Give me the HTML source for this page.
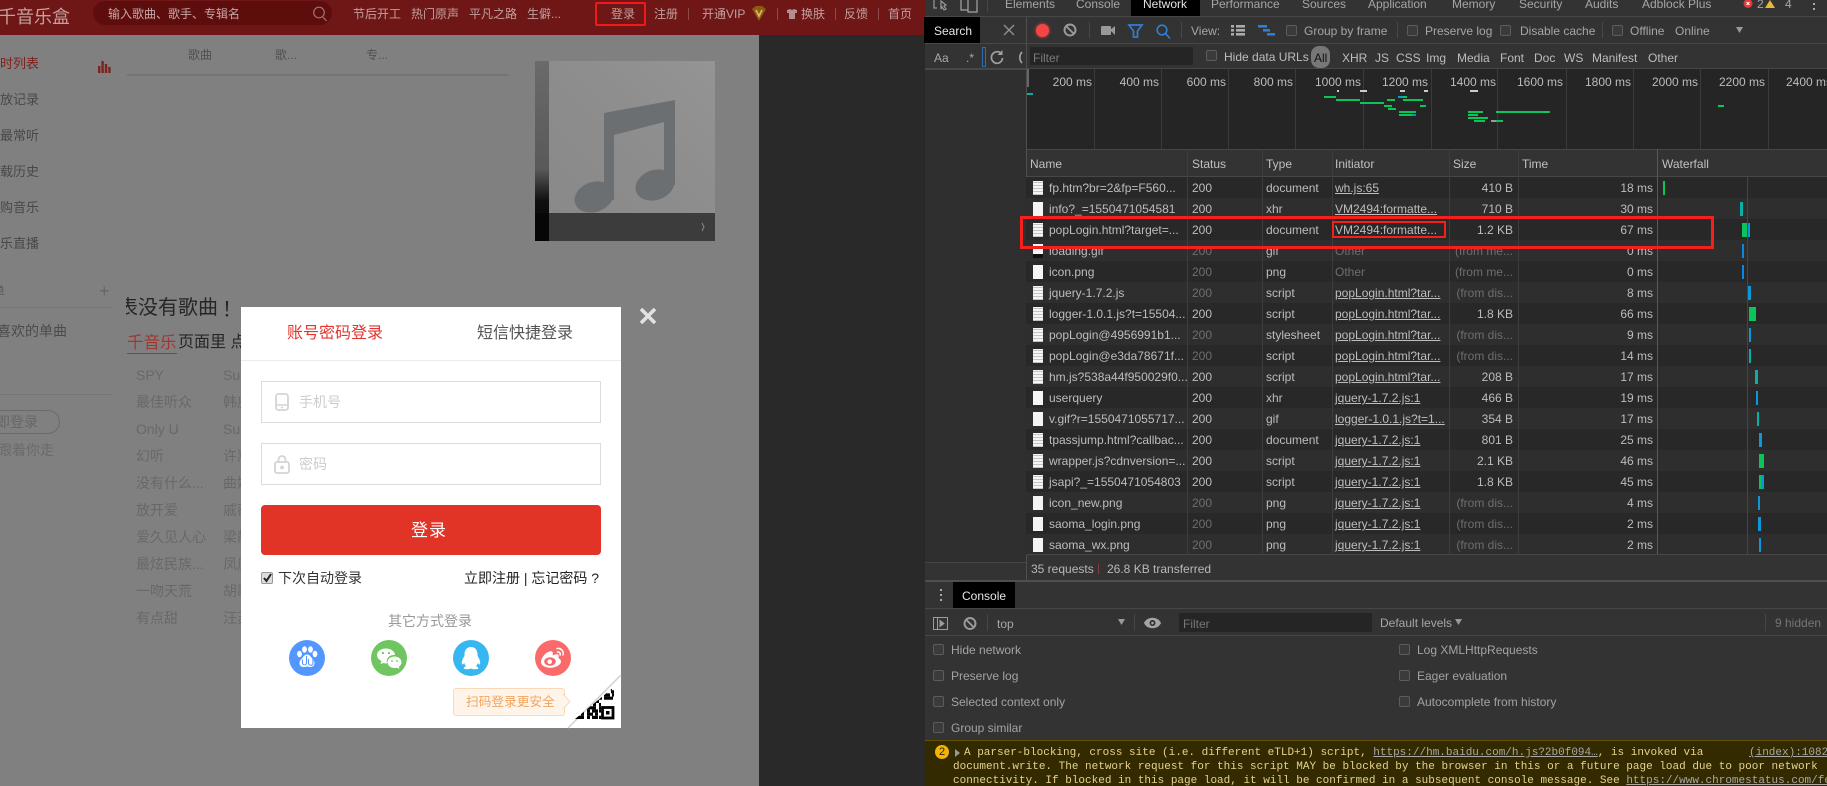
<!DOCTYPE html>
<html lang="zh">
<head>
<meta charset="utf-8">
<title>千音乐盒 DevTools</title>
<style>
html,body{margin:0;padding:0;width:1827px;height:786px;overflow:hidden;background:#333}
body{position:relative;font-family:"Liberation Sans","Noto Sans CJK SC",sans-serif;font-size:12px}
.a,.t{position:absolute}
.t{white-space:nowrap;line-height:16px}
svg{position:absolute;overflow:visible}
.h{color:#c0a0a0;font-size:12px;top:6px}
.p{color:#484848;font-size:13px}
.sn{color:#686868;font-size:14px;left:136px}
.ss{color:#686868;font-size:14px;left:223px;width:18px;overflow:hidden}
.d{color:#a6a6a6}
.l{background:#474747}
.cb{position:absolute;width:9px;height:9px;border:1px solid #5c5c5c;background:#3b3b3b;border-radius:2px}
.ov{position:absolute;top:69px;height:80px;width:1px;background:#3a3a3a}
.ol{position:absolute;top:74px;color:#bcbcbc;width:60px;text-align:right;line-height:16px}
.b{position:absolute;height:2px;background:#0bc45a}
.r{position:absolute;left:1026px;width:801px;height:21px;line-height:21px;color:#bdbdbd;background:#282828}
.r.e{background:#2e2e2e}
.r span{position:absolute;top:1px;white-space:nowrap}
.r i{position:absolute;left:7px;top:4px;width:10px;height:14px;background:#f4f4f4}
.r i.c{background:repeating-linear-gradient(#f4f4f4 0 1px,#c4c4c4 1px 2px,#f4f4f4 2px 3px)}
.n{left:23px}.s{left:166px}.ty{left:240px}.in{left:309px;text-decoration:underline}
.z{right:314px;text-align:right}.m{right:174px;text-align:right}.g{color:#6e6e6e}
.r u{position:absolute;top:4px;height:14px;display:block}
.o{color:#a3a3a3}
.w{font:11px/16px "Liberation Mono",monospace;color:#e5d290}
.w span{text-decoration:underline;color:#a8a8a8}
</style>
</head>
<body>
<!-- left page -->
<div class="a" style="left:0;top:0;width:925px;height:786px;background:#292929"></div>
<div class="a" style="left:0;top:35px;width:759px;height:751px;background:#808080"></div>
<div class="a" style="left:0;top:0;width:925px;height:35px;background:#6f1716"></div>
<div class="a" style="left:924px;top:17px;width:1px;height:26px;background:#000"></div>
<div class="t" style="left:-2px;top:6px;font-size:18px;line-height:22px;color:#c69f9d;width:72px;overflow:hidden">千音乐盒</div>
<div class="a" style="left:93px;top:1px;width:239px;height:24px;border-radius:12px;background:#5e0d0d"></div>
<div class="t" style="left:108px;top:6px;font-size:12px;color:#c6a8a8">输入歌曲、歌手、专辑名</div>
<svg style="left:311px;top:6px" width="18" height="16" fill="none" stroke="#9c7676" stroke-width="1.2"><circle cx="8" cy="6.5" r="5.3"/><path d="M12 11l3.5 4"/></svg>
<div class="t h" style="left:353px">节后开工</div>
<div class="t h" style="left:411px">热门原声</div>
<div class="t h" style="left:469px">平凡之路</div>
<div class="t h" style="left:527px">生僻...</div>
<div class="t h" style="left:611px">登录</div>
<div class="a" style="left:595px;top:2px;width:47px;height:20px;border:2px solid #f2191c;border-radius:2px"></div>
<div class="t h" style="left:654px">注册</div>
<div class="a" style="left:688px;top:8px;width:1px;height:12px;background:#8e4a48"></div>
<div class="t h" style="left:702px">开通VIP</div>
<svg style="left:751px;top:6px" width="16" height="15"><path d="M1 3l4-3h6l4 3-7 12z" fill="#8d5a10"/><path d="M5 4l3 6 3-6" fill="none" stroke="#d9b36a" stroke-width="1.8"/></svg>
<div class="a" style="left:777px;top:8px;width:1px;height:12px;background:#8e4a48"></div>
<svg style="left:787px;top:9px" width="10" height="10"><path d="M0 1l3-1 2 1 2-1 3 1v3H8v6H2V4H0z" fill="#b48d8d"/></svg>
<div class="t h" style="left:801px">换肤</div>
<div class="a" style="left:835px;top:8px;width:1px;height:12px;background:#8e4a48"></div>
<div class="t h" style="left:844px">反馈</div>
<div class="a" style="left:878px;top:8px;width:1px;height:12px;background:#8e4a48"></div>
<div class="t h" style="left:888px">首页</div>

<div class="t" style="left:0;top:56px;font-size:13px;color:#7d2220">时列表</div>
<div class="t p" style="left:0;top:92px">放记录</div>
<div class="t p" style="left:0;top:128px">最常听</div>
<div class="t p" style="left:0;top:164px">载历史</div>
<div class="t p" style="left:0;top:200px">购音乐</div>
<div class="t p" style="left:0;top:236px">乐直播</div>
<svg style="left:98px;top:61px" width="14" height="12" fill="#7d2220"><rect x="0" y="5" width="2.4" height="7"/><rect x="3.4" y="0" width="2.4" height="12"/><rect x="6.8" y="3" width="2.4" height="9"/><rect x="10.2" y="6" width="2.4" height="6"/></svg>
<div class="t" style="left:188px;top:47px;color:#505050">歌曲</div>
<div class="t" style="left:275px;top:47px;color:#505050">歌...</div>
<div class="t" style="left:366px;top:47px;color:#505050">专...</div>
<div class="a" style="left:127px;top:74px;width:381px;height:2px;background:#747474"></div>

<!-- album -->
<div class="a" style="left:535px;top:61px;width:180px;height:180px;background:linear-gradient(45deg,#888,#8d8d8d 55%,#949494)"></div>
<div class="a" style="left:535px;top:61px;width:14px;height:180px;background:linear-gradient(#6a6a6a,#595959 60%,#0e0e0e 78%,#050505)"></div>
<div class="a" style="left:549px;top:213px;width:166px;height:28px;background:#3c3c3c"></div>
<div class="a" style="left:535px;top:213px;width:14px;height:28px;background:#060606"></div>
<svg style="left:535px;top:61px" width="180" height="180"><g fill="#6b6f72"><ellipse cx="59" cy="136" rx="20" ry="15" transform="rotate(-20 59 136)"/><ellipse cx="120" cy="124" rx="20" ry="15" transform="rotate(-20 120 124)"/><path d="M69 52L140 39V124H129V61L79 74V139H69z"/></g><path d="M167 162l2 4-2 4" fill="none" stroke="#8a8a8a"/></svg>

<div class="t" style="left:-10px;top:284px;font-size:13px;color:#5a5a5a;width:15px;overflow:hidden;text-align:right">单</div>
<div class="t" style="left:99px;top:281px;font-size:18px;line-height:20px;color:#666">+</div>
<div class="a" style="left:0;top:307px;width:113px;height:1px;background:#757575"></div>
<div class="t" style="left:-3px;top:323px;font-size:14px;color:#4b4b4b">喜欢的单曲</div>
<div class="a" style="left:0;top:394px;width:113px;height:1px;background:#757575"></div>
<div class="a" style="left:-30px;top:410px;width:88px;height:22px;border:1px solid #6a6a6a;border-radius:12px"></div>
<div class="t" style="left:-4px;top:414px;font-size:14px;color:#666">即登录</div>
<div class="t" style="left:-2px;top:442px;font-size:14px;color:#6a6a6a">跟着你走</div>
<div class="a" style="left:126px;top:295px;width:115px;height:26px;overflow:hidden"><div class="t" style="left:-8px;top:1px;font-size:20px;line-height:24px;color:#262626">表没有歌曲</div><div class="t" style="left:96px;top:1px;font-size:20px;line-height:24px;color:#262626;font-family:'Noto Sans CJK SC',sans-serif">！</div></div>
<div class="t" style="left:127px;top:333px;font-size:16.5px;line-height:20px;color:#a03733;border-bottom:1px solid #a03733">千音乐</div>
<div class="t" style="left:178px;top:333px;font-size:16px;line-height:20px;color:#262626">页面里 点</div>

<div class="t sn" style="top:367px">SPY</div><div class="t ss" style="top:367px">Super</div>
<div class="t sn" style="top:394px">最佳听众</div><div class="t ss" style="top:394px">韩庚</div>
<div class="t sn" style="top:421px">Only U</div><div class="t ss" style="top:421px">Super</div>
<div class="t sn" style="top:448px">幻听</div><div class="t ss" style="top:448px">许嵩</div>
<div class="t sn" style="top:475px">没有什么...</div><div class="t ss" style="top:475px">曲婉</div>
<div class="t sn" style="top:502px">放开爱</div><div class="t ss" style="top:502px">戚薇</div>
<div class="t sn" style="top:529px">爱久见人心</div><div class="t ss" style="top:529px">梁静</div>
<div class="t sn" style="top:556px">最炫民族...</div><div class="t ss" style="top:556px">凤凰</div>
<div class="t sn" style="top:583px">一吻天荒</div><div class="t ss" style="top:583px">胡歌</div>
<div class="t sn" style="top:610px">有点甜</div><div class="t ss" style="top:610px">汪苏</div>

<!-- modal -->
<div class="a" style="left:241px;top:307px;width:380px;height:421px;background:#fff"></div>
<svg style="left:639px;top:307px" width="18" height="18"><path d="M2 2l14 14M16 2L2 16" stroke="#e2e2e2" stroke-width="3.6"/></svg>
<div class="t" style="left:287px;top:325px;font-size:16px;line-height:18px;color:#e2352f">账号密码登录</div>
<div class="t" style="left:477px;top:325px;font-size:16px;line-height:18px;color:#555">短信快捷登录</div>
<div class="a" style="left:241px;top:360px;width:380px;height:1px;background:#e8ebf0"></div>

<div class="a" style="left:261px;top:381px;width:338px;height:40px;border:1px solid #dcdcdc"></div>
<svg style="left:275px;top:393px" width="14" height="18"><rect x="1" y="1" width="12" height="16" rx="2.5" fill="none" stroke="#d4d4d4" stroke-width="1.8"/><path d="M1 12h12" stroke="#d4d4d4" stroke-width="1.5"/><circle cx="7" cy="14.5" r="1" fill="#d4d4d4"/></svg>
<div class="t" style="left:299px;top:394px;font-size:14px;color:#ccc">手机号</div>
<div class="a" style="left:261px;top:443px;width:338px;height:40px;border:1px solid #dcdcdc"></div>
<svg style="left:274px;top:455px" width="16" height="19" fill="none" stroke="#d4d4d4" stroke-width="1.8"><rect x="1" y="7" width="14" height="11" rx="2"/><path d="M4.500 7V4.500a3.500 3.500 0 017 0V7"/><circle cx="8" cy="12.500" r="1" fill="#d4d4d4"/></svg>
<div class="t" style="left:299px;top:456px;font-size:14px;color:#ccc">密码</div>
<div class="a" style="left:261px;top:505px;width:340px;height:50px;background:#e23327;border-radius:4px"></div>
<div class="t" style="left:411px;top:521px;font-size:17px;line-height:20px;color:#fff;letter-spacing:1px">登录</div>
<div class="a" style="left:261px;top:572px;width:10px;height:10px;border:1px solid #999;border-radius:2px;background:#ddd"></div>
<svg style="left:263px;top:573px" width="9" height="10"><path d="M1 5l2.500 3L8 1" fill="none" stroke="#222" stroke-width="2"/></svg>
<div class="t" style="left:278px;top:570px;font-size:14px;color:#333">下次自动登录</div>
<div class="t" style="left:464px;top:570px;font-size:14px;color:#222">立即注册 | 忘记密码 ?</div>
<div class="t" style="left:388px;top:613px;font-size:14px;color:#999">其它方式登录</div>

<svg style="left:289px;top:640px" width="36" height="36"><circle cx="18" cy="18" r="18" fill="#5297ff"/><g fill="#fff"><ellipse cx="10.500" cy="14" rx="2.400" ry="3.200"/><ellipse cx="15.500" cy="9.500" rx="2.400" ry="3.200"/><ellipse cx="21.500" cy="9.500" rx="2.400" ry="3.200"/><ellipse cx="26" cy="14" rx="2.400" ry="3.200"/><path d="M18 14.500c3 0 4 3 6 5 2.500 2.500 2 7-2 7.500-2 .2-3-.5-4-.5s-2 .7-4 .5c-4-.5-4.500-5-2-7.500 2-2 3-5 6-5z"/></g><path d="M13.500 19.500v3.500a2 2 0 004 0v-7M19.500 19v4a2.200 2.200 0 004.500 0v-4" fill="none" stroke="#5297ff" stroke-width="1.100"/></svg>
<svg style="left:371px;top:640px" width="36" height="36"><circle cx="18" cy="18" r="18" fill="#6fc55f"/><path d="M15 8.500c5.500 0 9 3.500 9 6.500-4.500-.5-9.500 2.500-8 8.500-1.500 0-2.500-.3-3.500-.5L9.500 24l1-3C7.500 19.500 6 17.500 6 15c0-3.700 4-6.500 9-6.500z" fill="#fff"/><path d="M23.500 16.500c3.800 0 7 2.600 7 5.700 0 1.900-1 3.300-2.700 4.500l.7 2.300-2.700-1.400c-.8.200-1.500.4-2.300.4-3.800 0-7-2.600-7-5.800s3.200-5.700 7-5.700z" fill="#fff"/><g fill="#6fc55f"><circle cx="12" cy="13" r="1.100"/><circle cx="18" cy="13" r="1.100"/><circle cx="21" cy="21" r=".9"/><circle cx="26" cy="21" r=".9"/></g></svg>
<svg style="left:453px;top:640px" width="36" height="36"><circle cx="18" cy="18" r="18" fill="#37b7f0"/><path d="M18 7c4.500 0 6.500 3.500 6.500 7.500 0 1.500.5 2 1.500 4 1.500 3 1.500 6 .5 6-.6 0-1.200-.8-1.700-1.800-.3 1.500-1 2.800-2 3.600 1.700.5 2.700 1.200 2.500 2-.2.800-3 1.200-5 .9-1-.2-1.500-.4-2.300-.4s-1.300.2-2.300.4c-2 .3-4.800-.1-5-.9-.2-.8.800-1.500 2.500-2-1-.8-1.700-2.100-2-3.600-.5 1-1.100 1.800-1.700 1.800-1 0-1-3 .5-6 1-2 1.500-2.500 1.500-4C11.500 10.500 13.500 7 18 7z" fill="#fff"/></svg>
<svg style="left:535px;top:640px" width="36" height="36"><circle cx="18" cy="18" r="18" fill="#fb6a6a"/><path d="M24 18.500c-1-.3-.6-1-.4-1.500.5-1.300.1-2.700-1.900-2.700-1.400 0-3.500 1-3.500 1s-.8.3-.5-.5c.5-1.600.2-3.200-1.300-3.500C14 11 10.500 13 8 16.500 6.500 18.700 6 20.500 6 22c0 3.500 4.500 5.800 9.500 5.800 6 0 10.500-3.500 10.500-6 0-1.800-1-2.800-2-3.300z" fill="#fff"/><ellipse cx="15" cy="21.500" rx="5.800" ry="4.300" fill="#fb6a6a"/><circle cx="14.700" cy="21.700" r="2.300" fill="#fff"/><path d="M22 8.500c4-.8 7 2.500 6 6.500M22.500 12c2-.3 3 1 2.700 3" fill="none" stroke="#fff" stroke-width="1.500" stroke-linecap="round"/></svg>

<div class="a" style="left:453px;top:688px;width:110px;height:26px;background:#fff4e9;border:1px solid #fad9b8;border-radius:3px"></div>
<svg style="left:563px;top:694px" width="8" height="15"><path d="M0 0l7 7.500L0 15" fill="#fff4e9" stroke="#fad9b8"/></svg>
<div class="t" style="left:466px;top:694px;font-size:12.700px;color:#f3a55c">扫码登录更安全</div>
<svg style="left:560px;top:670px" width="62" height="60"><defs><clipPath id="qr"><path d="M15 49L54 17V49z"/></clipPath></defs><path d="M61 5L8 58" stroke="#cfcfcf" stroke-width="1.500"/>
<g stroke="#000" stroke-width="3.200" clip-path="url(#qr)">
<path d="M40 18.600h14" stroke-dasharray="3 3 6 2"/>
<path d="M36 21.800h18" stroke-dasharray="6 2 3 4"/>
<path d="M33 25h21" stroke-dasharray="3 3 3 2 6 2"/>
<path d="M30 28.200h24" stroke-dasharray="6 3 3 2 9 1"/>
<path d="M27 31.400h14" stroke-dasharray="3 3 6 3"/>
<path d="M25 34.600h16" stroke-dasharray="6 2 3 3"/>
<path d="M21 37.800h20" stroke-dasharray="3 3 9 3"/>
<path d="M18 41h23" stroke-dasharray="6 3 3 2 6 1"/>
<path d="M15 44.200h26" stroke-dasharray="3 3 3 3 6 2"/>
<path d="M15 47.400h26" stroke-dasharray="9 3 3 2 6 1"/>
</g>
<rect x="42.500" y="37.500" width="10.500" height="10.500" fill="#fff" stroke="#000" stroke-width="2.800"/><rect x="46" y="41" width="3.500" height="3.500"/></svg>

<!-- devtools -->
<div class="a" style="left:925px;top:0;width:902px;height:786px;background:#333"></div>
<div class="a l" style="left:925px;top:16px;width:902px;height:1px"></div>
<svg style="left:933px;top:0" width="60" height="14" fill="none" stroke="#999" stroke-width="1.200"><path d="M1 0v8h3M8 1l5 4-2 1 2 3-2 1-2-3-1 2z"/><path d="M28 0v10h7V0M35 0v12h9V0" stroke="#a5a5a5"/></svg>
<div class="a l" style="left:987px;top:0;width:1px;height:12px"></div>
<div class="a" style="left:1131px;top:0;width:69px;height:16px;background:#000"></div>
<div class="t d" style="left:1005px;top:-4px">Elements</div>
<div class="t d" style="left:1076px;top:-4px">Console</div>
<div class="t" style="left:1143px;top:-4px;color:#e2e2e2">Network</div>
<div class="t d" style="left:1211px;top:-4px">Performance</div>
<div class="t d" style="left:1302px;top:-4px">Sources</div>
<div class="t d" style="left:1368px;top:-4px">Application</div>
<div class="t d" style="left:1452px;top:-4px">Memory</div>
<div class="t d" style="left:1519px;top:-4px">Security</div>
<div class="t d" style="left:1585px;top:-4px">Audits</div>
<div class="t d" style="left:1642px;top:-4px">Adblock Plus</div>
<svg style="left:1743px;top:0" width="36" height="12"><circle cx="5" cy="3.500" r="4.500" fill="#e0393a"/><path d="M3.500 2l3 3M6.500 2l-3 3" stroke="#fff"/><path d="M27 0l5 8h-10z" fill="#e7b833"/></svg>
<div class="t d" style="left:1757px;top:-4px">2</div>
<div class="t d" style="left:1785px;top:-4px">4</div>
<div class="a" style="left:1813px;top:8px;width:2px;height:2px;background:#aaa;box-shadow:0 -5px 0 #aaa"></div>

<!-- search drawer -->
<div class="a" style="left:925px;top:17px;width:55px;height:26px;background:#000"></div>
<div class="t" style="left:934px;top:23px;color:#e6e6e6">Search</div>
<svg style="left:1004px;top:25px" width="10" height="10"><path d="M0 0l10 10M10 0L0 10" stroke="#8f8f8f" stroke-width="1.400"/></svg>
<div class="a l" style="left:925px;top:43px;width:902px;height:1px"></div>
<div class="t" style="left:934px;top:50px;color:#a8a8a8">Aa</div>
<div class="t" style="left:966px;top:50px;color:#a8a8a8">.*</div>
<div class="a" style="left:982px;top:47px;width:2px;height:18px;border:1px solid #2a6db5"></div>
<svg style="left:990px;top:50px" width="36" height="15" fill="none" stroke="#a0a0a0" stroke-width="1.700"><path d="M11.500 3.500A5.500 5.500 0 103 11.500 5.500 5.500 0 0012.500 8"/><path d="M12.500 0v5h-5z" fill="#a0a0a0" stroke="none"/><path d="M32 2a8 8 0 000 11"/></svg>
<div class="a l" style="left:925px;top:68px;width:902px;height:2px"></div>
<div class="a" style="left:925px;top:70px;width:101px;height:492px;background:#2f2f2f"></div>
<div class="a l" style="left:925px;top:562px;width:101px;height:1px"></div>
<div class="a" style="left:1026px;top:17px;width:1px;height:564px;background:#4f4f4f"></div>

<!-- network toolbar -->
<div class="a" style="left:1036px;top:24px;width:13px;height:13px;border-radius:50%;background:#f44545;box-shadow:0 0 3px #f44545"></div>
<svg style="left:1063px;top:23px" width="14" height="14" fill="none" stroke="#9c9c9c" stroke-width="1.900"><circle cx="7" cy="7" r="5.500"/><path d="M3 3l8 8"/></svg>
<div class="a l" style="left:1089px;top:22px;width:1px;height:16px"></div>
<svg style="left:1101px;top:25px" width="14" height="11" fill="#999"><rect y="1" width="10" height="9" rx="1"/><path d="M9 5l5-4v9z"/></svg>
<svg style="left:1128px;top:24px" width="16" height="15" fill="none" stroke="#2f7fd3" stroke-width="1.700"><path d="M1 1h13L9.500 7v6h-4V7z"/></svg>
<svg style="left:1156px;top:24px" width="15" height="15" fill="none" stroke="#2f7fd3" stroke-width="1.600"><circle cx="6" cy="6" r="4.800"/><path d="M9.500 9.500l4.500 5"/></svg>
<div class="a l" style="left:1181px;top:22px;width:1px;height:16px"></div>
<div class="t d" style="left:1191px;top:23px">View:</div>
<svg style="left:1231px;top:25px" width="14" height="11" fill="#aaa"><rect width="3" height="2.600"/><rect x="5" width="9" height="2.600"/><rect y="4" width="3" height="2.600"/><rect x="5" y="4" width="9" height="2.600"/><rect y="8" width="3" height="2.600"/><rect x="5" y="8" width="9" height="2.600"/></svg>
<svg style="left:1258px;top:25px" width="17" height="11" fill="#2f7fd3"><rect width="9" height="2.600"/><rect x="5" y="4" width="7" height="2.600"/><rect x="9" y="8" width="8" height="2.600"/></svg>
<div class="cb" style="left:1286px;top:25px"></div>
<div class="t d" style="left:1304px;top:23px">Group by frame</div>
<div class="a l" style="left:1397px;top:22px;width:1px;height:16px"></div>
<div class="cb" style="left:1407px;top:25px"></div>
<div class="t d" style="left:1425px;top:23px">Preserve log</div>
<div class="cb" style="left:1500px;top:25px"></div>
<div class="t d" style="left:1520px;top:23px">Disable cache</div>
<div class="a l" style="left:1602px;top:22px;width:1px;height:16px"></div>
<div class="cb" style="left:1612px;top:25px"></div>
<div class="t d" style="left:1630px;top:23px">Offline</div>
<div class="t d" style="left:1675px;top:23px">Online</div>
<svg style="left:1736px;top:27px" width="8" height="6"><path d="M0 0h7L3.500 6z" fill="#999"/></svg>

<!-- filter row -->
<div class="a" style="left:1030px;top:47px;width:163px;height:18px;background:#252525"></div>
<div class="t" style="left:1033px;top:50px;color:#7b7b7b">Filter</div>
<div class="cb" style="left:1206px;top:50px"></div>
<div class="t" style="left:1224px;top:49px;color:#bdbdbd">Hide data URLs</div>
<div class="a" style="left:1311px;top:46px;width:19px;height:22px;border-radius:8px;background:#777"></div>
<div class="t" style="left:1314px;top:50px;color:#111">All</div>
<div class="t" style="left:1342px;top:50px;color:#bdbdbd">XHR</div>
<div class="t" style="left:1375px;top:50px;color:#bdbdbd">JS</div>
<div class="t" style="left:1396px;top:50px;color:#bdbdbd">CSS</div>
<div class="t" style="left:1426px;top:50px;color:#bdbdbd">Img</div>
<div class="t" style="left:1457px;top:50px;color:#bdbdbd">Media</div>
<div class="t" style="left:1500px;top:50px;color:#bdbdbd">Font</div>
<div class="t" style="left:1534px;top:50px;color:#bdbdbd">Doc</div>
<div class="t" style="left:1564px;top:50px;color:#bdbdbd">WS</div>
<div class="t" style="left:1592px;top:50px;color:#bdbdbd">Manifest</div>
<div class="t" style="left:1648px;top:50px;color:#bdbdbd">Other</div>

<!-- overview -->
<div class="a" style="left:1027px;top:69px;width:800px;height:80px;background:#252525"></div>
<div class="a" style="left:1027px;top:69px;width:2px;height:18px;background:#666"></div>
<div class="ov" style="left:1094px"></div><div class="ov" style="left:1161px"></div><div class="ov" style="left:1228px"></div><div class="ov" style="left:1295px"></div><div class="ov" style="left:1363px"></div><div class="ov" style="left:1431px"></div><div class="ov" style="left:1497px"></div><div class="ov" style="left:1566px"></div><div class="ov" style="left:1633px"></div><div class="ov" style="left:1700px"></div><div class="ov" style="left:1768px"></div>
<div class="ol" style="left:1032px">200 ms</div><div class="ol" style="left:1099px">400 ms</div><div class="ol" style="left:1166px">600 ms</div><div class="ol" style="left:1233px">800 ms</div><div class="ol" style="left:1301px">1000 ms</div><div class="ol" style="left:1368px">1200 ms</div><div class="ol" style="left:1436px">1400 ms</div><div class="ol" style="left:1503px">1600 ms</div><div class="ol" style="left:1571px">1800 ms</div><div class="ol" style="left:1638px">2000 ms</div><div class="ol" style="left:1705px">2200 ms</div><div class="ol" style="left:1772px">2400 ms</div>
<div class="b" style="left:1027px;top:93px;width:6px;background:linear-gradient(90deg,#0bc45a,#0a98d8)"></div>
<div class="b" style="left:1324px;top:96px;width:12px"></div>
<div class="b" style="left:1336px;top:99px;width:24px"></div>
<div class="b" style="left:1360px;top:102px;width:24px"></div>
<div class="b" style="left:1384px;top:105px;width:8px"></div>
<div class="b" style="left:1388px;top:108px;width:8px"></div>
<div class="b" style="left:1399px;top:111px;width:17px"></div>
<div class="b" style="left:1399px;top:114px;width:17px;background:linear-gradient(90deg,#0bc45a 80%,#0a88e0 80%)"></div>
<div class="b" style="left:1387px;top:99px;width:8px"></div>
<div class="b" style="left:1398px;top:96px;width:9px;background:linear-gradient(90deg,#0a98d8 50%,#0bc45a 50%)"></div>
<div class="b" style="left:1403px;top:99px;width:20px"></div>
<div class="b" style="left:1420px;top:105px;width:6px"></div>
<div class="b" style="left:1468px;top:111px;width:15px"></div>
<div class="b" style="left:1468px;top:114px;width:10px"></div>
<div class="b" style="left:1468px;top:117px;width:20px"></div>
<div class="b" style="left:1474px;top:120px;width:11px"></div>
<div class="b" style="left:1491px;top:120px;width:12px;background:linear-gradient(90deg,#999 40%,#0bc45a 40%)"></div>
<div class="b" style="left:1496px;top:111px;width:54px"></div>
<div class="b" style="left:1718px;top:105px;width:6px"></div>
<div class="b" style="left:1337px;top:90px;width:2px;background:#ccc"></div>
<div class="b" style="left:1360px;top:90px;width:7px;background:#ccc"></div>
<div class="b" style="left:1400px;top:90px;width:5px;background:#ccc"></div>
<div class="b" style="left:1424px;top:90px;width:4px;background:#ccc"></div>
<div class="b" style="left:1470px;top:90px;width:8px;background:#ccc"></div>

<!-- table header -->
<div class="a l" style="left:1027px;top:149px;width:800px;height:1px"></div>
<div class="t" style="left:1030px;top:156px;color:#c0c0c0">Name</div>
<div class="t" style="left:1192px;top:156px;color:#c0c0c0">Status</div>
<div class="t" style="left:1266px;top:156px;color:#c0c0c0">Type</div>
<div class="t" style="left:1335px;top:156px;color:#c0c0c0">Initiator</div>
<div class="t" style="left:1453px;top:156px;color:#c0c0c0">Size</div>
<div class="t" style="left:1522px;top:156px;color:#c0c0c0">Time</div>
<div class="t" style="left:1662px;top:156px;color:#c0c0c0">Waterfall</div>
<div class="a l" style="left:1027px;top:176px;width:800px;height:1px"></div>

<!-- rows -->
<div class="r" style="top:177px"><i class="c"></i><span class="n">fp.htm?br=2&amp;fp=F560...</span><span class="s">200</span><span class="ty">document</span><span class="in">wh.js:65</span><span class="z">410 B</span><span class="m">18 ms</span><u style="left:637px;width:2px;background:#0bc45a"></u></div>
<div class="r e" style="top:198px"><i></i><span class="n">info?_=1550471054581</span><span class="s">200</span><span class="ty">xhr</span><span class="in">VM2494:formatte...</span><span class="z">710 B</span><span class="m">30 ms</span><u style="left:714px;width:3px;background:#0ab0a8"></u></div>
<div class="r" style="top:219px"><i class="c"></i><span class="n">popLogin.html?target=...</span><span class="s">200</span><span class="ty">document</span><span class="in" style="text-decoration:none">VM2494:formatte...</span><span class="z">1.2 KB</span><span class="m">67 ms</span><u style="left:716px;width:5px;background:#0bc45a"></u><u style="left:721px;width:3px;background:#0a98d8"></u></div>
<div class="r e" style="top:240px"><i style="background:linear-gradient(#f4f4f4 70%,#111 70%)"></i><span class="n">loading.gif</span><span class="s g">200</span><span class="ty">gif</span><span class="in g" style="text-decoration:none">Other</span><span class="z g">(from me...</span><span class="m">0 ms</span><u style="left:716px;width:2px;background:#0a88e0"></u></div>
<div class="r" style="top:261px"><i></i><span class="n">icon.png</span><span class="s g">200</span><span class="ty">png</span><span class="in g" style="text-decoration:none">Other</span><span class="z g">(from me...</span><span class="m">0 ms</span><u style="left:716px;width:2px;background:#0a88e0"></u></div>
<div class="r e" style="top:282px"><i class="c"></i><span class="n">jquery-1.7.2.js</span><span class="s g">200</span><span class="ty">script</span><span class="in">popLogin.html?tar...</span><span class="z g">(from dis...</span><span class="m">8 ms</span><u style="left:722px;width:3px;background:#0a98d8"></u></div>
<div class="r" style="top:303px"><i class="c"></i><span class="n">logger-1.0.1.js?t=15504...</span><span class="s">200</span><span class="ty">script</span><span class="in">popLogin.html?tar...</span><span class="z">1.8 KB</span><span class="m">66 ms</span><u style="left:723px;width:7px;background:#0bc45a"></u></div>
<div class="r e" style="top:324px"><i class="c"></i><span class="n">popLogin@4956991b1...</span><span class="s g">200</span><span class="ty">stylesheet</span><span class="in">popLogin.html?tar...</span><span class="z g">(from dis...</span><span class="m">9 ms</span><u style="left:723px;width:2px;background:#0a98d8"></u></div>
<div class="r" style="top:345px"><i class="c"></i><span class="n">popLogin@e3da78671f...</span><span class="s g">200</span><span class="ty">script</span><span class="in">popLogin.html?tar...</span><span class="z g">(from dis...</span><span class="m">14 ms</span><u style="left:723px;width:2px;background:#0ab0a8"></u></div>
<div class="r e" style="top:366px"><i class="c"></i><span class="n">hm.js?538a44f950029f0...</span><span class="s">200</span><span class="ty">script</span><span class="in">popLogin.html?tar...</span><span class="z">208 B</span><span class="m">17 ms</span><u style="left:729px;width:3px;background:#0ab0a8"></u></div>
<div class="r" style="top:387px"><i></i><span class="n">userquery</span><span class="s">200</span><span class="ty">xhr</span><span class="in">jquery-1.7.2.js:1</span><span class="z">466 B</span><span class="m">19 ms</span><u style="left:730px;width:2px;background:#0a98d8"></u></div>
<div class="r e" style="top:408px"><i></i><span class="n">v.gif?r=1550471055717...</span><span class="s">200</span><span class="ty">gif</span><span class="in">logger-1.0.1.js?t=1...</span><span class="z">354 B</span><span class="m">17 ms</span><u style="left:731px;width:2px;background:#0ab0a8"></u></div>
<div class="r" style="top:429px"><i class="c"></i><span class="n">tpassjump.html?callbac...</span><span class="s">200</span><span class="ty">document</span><span class="in">jquery-1.7.2.js:1</span><span class="z">801 B</span><span class="m">25 ms</span><u style="left:733px;width:3px;background:#0a98d8"></u></div>
<div class="r e" style="top:450px"><i class="c"></i><span class="n">wrapper.js?cdnversion=...</span><span class="s">200</span><span class="ty">script</span><span class="in">jquery-1.7.2.js:1</span><span class="z">2.1 KB</span><span class="m">46 ms</span><u style="left:733px;width:5px;background:#0bc45a"></u></div>
<div class="r" style="top:471px"><i class="c"></i><span class="n">jsapi?_=1550471054803</span><span class="s">200</span><span class="ty">script</span><span class="in">jquery-1.7.2.js:1</span><span class="z">1.8 KB</span><span class="m">45 ms</span><u style="left:733px;width:2px;background:#0bc45a"></u><u style="left:735px;width:3px;background:#0a98d8"></u></div>
<div class="r e" style="top:492px"><i></i><span class="n">icon_new.png</span><span class="s g">200</span><span class="ty">png</span><span class="in">jquery-1.7.2.js:1</span><span class="z g">(from dis...</span><span class="m">4 ms</span><u style="left:732px;width:2px;background:#0a98d8"></u></div>
<div class="r" style="top:513px"><i></i><span class="n">saoma_login.png</span><span class="s g">200</span><span class="ty">png</span><span class="in">jquery-1.7.2.js:1</span><span class="z g">(from dis...</span><span class="m">2 ms</span><u style="left:732px;width:3px;background:#0a98d8"></u></div>
<div class="r e" style="top:534px"><i></i><span class="n">saoma_wx.png</span><span class="s g">200</span><span class="ty">png</span><span class="in">jquery-1.7.2.js:1</span><span class="z g">(from dis...</span><span class="m">2 ms</span><u style="left:733px;width:2px;background:#0a98d8"></u></div>

<div class="a" style="left:1187px;top:149px;width:1px;height:406px;background:#3d3d3d"></div>
<div class="a" style="left:1262px;top:149px;width:1px;height:406px;background:#3d3d3d"></div>
<div class="a" style="left:1332px;top:149px;width:1px;height:406px;background:#3d3d3d"></div>
<div class="a" style="left:1449px;top:149px;width:1px;height:406px;background:#3d3d3d"></div>
<div class="a" style="left:1518px;top:149px;width:1px;height:406px;background:#3d3d3d"></div>
<div class="a" style="left:1657px;top:149px;width:1px;height:406px;background:#585858"></div>
<div class="a" style="left:1747px;top:177px;width:1px;height:378px;background:#454545"></div>

<!-- red annotations -->
<div class="a" style="left:1020px;top:216px;width:688px;height:27px;border:3px solid #f5201c"></div>
<div class="a" style="left:1332px;top:221px;width:110px;height:13px;border:2px solid #f5201c"></div>

<!-- footer -->
<div class="a" style="left:1027px;top:554px;width:800px;height:26px;background:#333"></div>
<div class="a l" style="left:1027px;top:554px;width:800px;height:1px"></div>
<div class="t" style="left:1031px;top:561px;color:#b8b8b8">35 requests</div>
<div class="a" style="left:1098px;top:564px;width:1px;height:10px;background:#8a3c3c"></div>
<div class="t" style="left:1107px;top:561px;color:#b8b8b8">26.8 KB transferred</div>
<div class="a" style="left:925px;top:580px;width:902px;height:2px;background:#4f4f4f"></div>

<!-- console -->
<div class="a" style="left:940px;top:589px;width:2px;height:2px;background:#aaa;box-shadow:0 5px 0 #aaa,0 10px 0 #aaa"></div>
<div class="a" style="left:953px;top:582px;width:62px;height:26px;background:#000"></div>
<div class="t" style="left:962px;top:588px;color:#e6e6e6">Console</div>
<div class="a l" style="left:925px;top:608px;width:902px;height:1px"></div>
<svg style="left:933px;top:616px" width="46" height="15" fill="none" stroke="#9c9c9c"><rect x=".5" y="1.500" width="14" height="12"/><path d="M4.500 1.500v12"/><path d="M7 4.500l4 3-4 3z" fill="#9c9c9c"/><circle cx="37" cy="7.500" r="5.500" stroke-width="1.900"/><path d="M33 3.500l8 8" stroke-width="1.900"/></svg>
<div class="a l" style="left:987px;top:614px;width:1px;height:17px"></div>
<div class="t d" style="left:997px;top:616px">top</div>
<svg style="left:1118px;top:619px" width="7" height="6"><path d="M0 0h7L3.500 6z" fill="#999"/></svg>
<div class="a l" style="left:1134px;top:614px;width:1px;height:17px"></div>
<svg style="left:1144px;top:617px" width="17" height="12"><path d="M0 6c3-7 14-7 17 0-3 7-14 7-17 0z" fill="#a5a5a5"/><circle cx="8.500" cy="6" r="3" fill="#333"/><circle cx="8.500" cy="6" r="1.300" fill="#a5a5a5"/></svg>
<div class="a" style="left:1179px;top:613px;width:193px;height:19px;background:#252525"></div>
<div class="t" style="left:1183px;top:616px;color:#777">Filter</div>
<div class="t d" style="left:1380px;top:615px">Default levels</div>
<svg style="left:1455px;top:619px" width="7" height="6"><path d="M0 0h7L3.500 6z" fill="#999"/></svg>
<div class="a l" style="left:1765px;top:614px;width:1px;height:17px"></div>
<div class="t" style="left:1775px;top:615px;color:#757575">9 hidden</div>
<div class="a l" style="left:925px;top:635px;width:902px;height:1px"></div>

<div class="cb" style="left:933px;top:644px"></div><div class="t o" style="left:951px;top:642px">Hide network</div>
<div class="cb" style="left:933px;top:670px"></div><div class="t o" style="left:951px;top:668px">Preserve log</div>
<div class="cb" style="left:933px;top:696px"></div><div class="t o" style="left:951px;top:694px">Selected context only</div>
<div class="cb" style="left:933px;top:722px"></div><div class="t o" style="left:951px;top:720px">Group similar</div>
<div class="cb" style="left:1399px;top:644px"></div><div class="t o" style="left:1417px;top:642px">Log XMLHttpRequests</div>
<div class="cb" style="left:1399px;top:670px"></div><div class="t o" style="left:1417px;top:668px">Eager evaluation</div>
<div class="cb" style="left:1399px;top:696px"></div><div class="t o" style="left:1417px;top:694px">Autocomplete from history</div>

<!-- warning -->
<div class="a" style="left:925px;top:740px;width:902px;height:46px;background:#332a00;border-top:1px solid #665500;box-sizing:border-box"></div>
<div class="a" style="left:935px;top:745px;width:14px;height:14px;border-radius:50%;background:#f4b400;color:#222;font-size:11px;line-height:14px;text-align:center">2</div>
<svg style="left:955px;top:749px" width="6" height="8"><path d="M0 0l5 4-5 4z" fill="#999"/></svg>
<div class="t w" style="left:964px;top:745px">A parser-blocking, cross site (i.e. different eTLD+1) script, <span>https://hm.baidu.com/h.js?2b0f094…</span>, is invoked via</div>
<div class="t w" style="left:1749px;top:745px;color:#a8a8a8;text-decoration:underline">(index):1082</div>
<div class="t w" style="left:953px;top:759px">document.write. The network request for this script MAY be blocked by the browser in this or a future page load due to poor network</div>
<div class="t w" style="left:953px;top:773px">connectivity. If blocked in this page load, it will be confirmed in a subsequent console message. See <span>https://www.chromestatus.com/fe</span></div>
</body>
</html>
